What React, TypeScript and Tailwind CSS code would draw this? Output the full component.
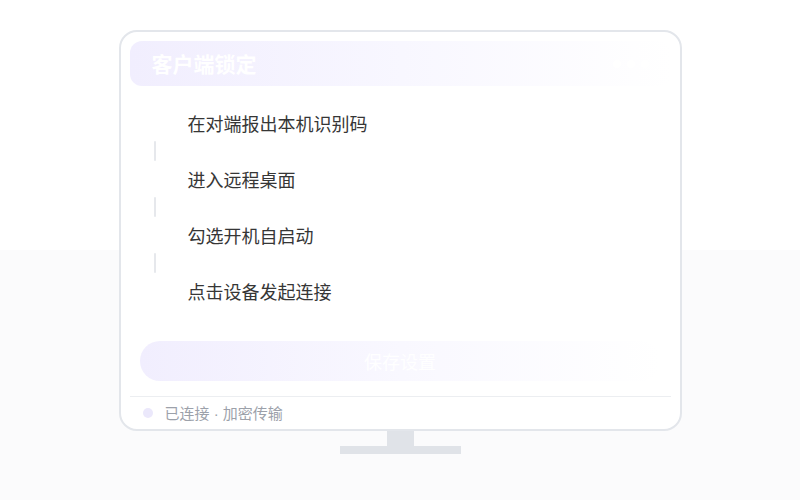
import React from 'react';

const steps = ['在对端报出本机识别码', '进入远程桌面', '勾选开机自启动', '点击设备发起连接'];

const font = { fontFamily: '"Noto Sans CJK SC", "Noto Sans", sans-serif' };

export default function App() {
  return (
    <div
      className="w-[800px] h-[500px] flex flex-col items-center pt-[30px] bg-[linear-gradient(to_bottom,#ffffff_50%,#fbfbfc_50%)]"
      style={font}
    >
      {/* Monitor */}
      <div className="w-[563px] h-[401px] bg-white border-2 border-[#e3e6eb] rounded-[18px] px-[9px] pt-[9px] flex flex-col">
        {/* Header */}
        <div className="h-[45px] shrink-0 flex items-center justify-between pl-[22px] pr-[14px] rounded-xl bg-gradient-to-r from-[#f1eefe] via-[#f8f7ff] to-white">
          <span className="text-[21px] font-bold text-white leading-none">客户端锁定</span>
          <div className="flex gap-[6px] mr-2">
            <span className="w-2 h-2 rounded-full bg-white" />
            <span className="w-2 h-2 rounded-full bg-white" />
            <span className="w-2 h-2 rounded-full bg-white" />
          </div>
        </div>

        {/* Steps */}
        <div className="mt-[19px] flex flex-col">
          {steps.map((s, i) => (
            <React.Fragment key={i}>
              {i > 0 && (
                <div className="h-5 pl-[24px]">
                  <div className="w-[2px] h-full bg-[#e6e8ec] rounded-full" />
                </div>
              )}
              <div className="h-9 flex items-center">
                <div className="w-[50px] flex justify-center">
                  <span className="w-6 h-6 rounded-full bg-white text-white text-xs flex items-center justify-center">
                    {i + 1}
                  </span>
                </div>
                <span className="ml-2 text-[18px] text-[#363636] leading-none">{s}</span>
              </div>
            </React.Fragment>
          ))}
        </div>

        {/* Save button */}
        <div className="mt-[32px] mx-[10px] h-10 shrink-0 rounded-full bg-gradient-to-r from-[#f1eefe] via-[#f9f8ff] to-white flex items-center justify-center">
          <span className="text-[18px] text-white leading-none">保存设置</span>
        </div>

        {/* Footer */}
        <div className="mt-[15px] h-px bg-[#eceef1]" />
        <div className="h-[31px] flex items-center pl-[13px] gap-3">
          <span className="w-[10px] h-[10px] rounded-full bg-[#ebe8fb]" />
          <span className="text-[15px] text-[#9ca1aa] leading-none">
            已连接
            <span style={{ fontFamily: '"Liberation Sans", sans-serif' }}> · </span>
            加密传输
          </span>
        </div>
      </div>

      {/* Stand */}
      <div className="w-[27px] h-[15px] bg-[#e0e3e8]" />
      <div className="w-[121px] h-2 bg-[#e0e3e8]" />
    </div>
  );
}
